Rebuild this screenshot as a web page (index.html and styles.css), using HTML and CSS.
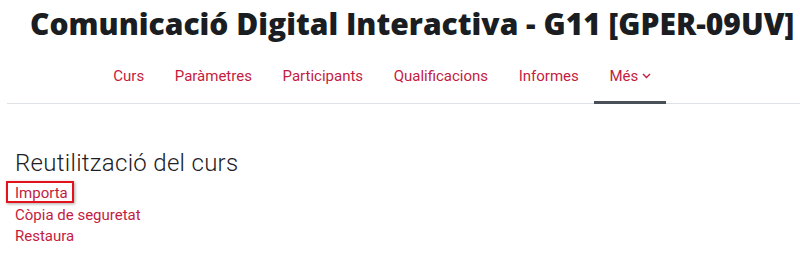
FILE: index.html
```html
<!DOCTYPE html>
<html lang="ca">
<head>
<meta charset="utf-8">
<title>Reutilització del curs</title>
<link rel="stylesheet" href="styles.css">
</head>
<body>
<header class="page-header">
  <h1 class="course-title">Comunicació Digital Interactiva - G11 [GPER-09UV]</h1>
</header>
<nav class="secondary-nav">
  <ul class="nav-list">
    <li class="nav-item"><a href="#">Curs</a></li>
    <li class="nav-item"><a href="#">Paràmetres</a></li>
    <li class="nav-item"><a href="#">Participants</a></li>
    <li class="nav-item"><a href="#">Qualificacions</a></li>
    <li class="nav-item"><a href="#">Informes</a></li>
    <li class="nav-item active"><a href="#">Més <svg class="chev" width="9" height="6" viewBox="0 0 9 6"><path d="M1 1l3.5 3.5L8 1" fill="none" stroke="currentColor" stroke-width="1.4"/></svg></a></li>
  </ul>
</nav>
<main class="content">
  <h2 class="section-title">Reutilització del curs</h2>
  <ul class="links">
    <li><a href="#" class="highlight">Importa</a></li>
    <li><a href="#">Còpia de seguretat</a></li>
    <li><a href="#">Restaura</a></li>
  </ul>
</main>
</body>
</html>
```

FILE: styles.css
```css
html, body {
  margin: 0;
  padding: 0;
  background: #fff;
}
body {
  width: 800px;
  height: 256px;
  overflow: hidden;
  font-family: "Roboto", "Liberation Sans", sans-serif;
  color: #1d2125;
}
a {
  color: #c31c3f;
  text-decoration: none;
}
.page-header {
  padding: 6px 0 0 30px;
  height: 44px;
}
.course-title {
  margin: 0;
  font-family: "Open Sans", "Liberation Sans", sans-serif;
  font-size: 30px;
  line-height: 36px;
  font-weight: 800;
  white-space: nowrap;
  color: #1a1d21;
}
.secondary-nav {
  margin-left: 7px;
  border-bottom: 1px solid #dee2e6;
}
.nav-list {
  list-style: none;
  margin: 0;
  padding: 0 0 0 91px;
  display: flex;
  height: 53px;
}
.nav-item {
  display: flex;
  align-items: center;
  padding: 0 15.3px;
  font-size: 15px;
  border-bottom: 3px solid transparent;
  margin-bottom: -1px;
}
.nav-item.active {
  border-bottom-color: #495057;
}
.nav-item a {
  display: flex;
  align-items: center;
  gap: 4px;
}
.chev {
  display: block;
  margin-top: 1px;
}
.content {
  padding: 45px 15px 0;
}
.section-title {
  margin: 0 0 6px;
  font-size: 24px;
  font-weight: 300;
  letter-spacing: 0.3px;
  line-height: 28px;
  color: #1d2125;
}
.links {
  list-style: none;
  margin: 0;
  padding: 0;
  font-size: 15px;
  line-height: 21.5px;
}
.highlight {
  position: relative;
}
.highlight::before {
  content: "";
  position: absolute;
  left: -9px;
  right: -6px;
  top: -3px;
  bottom: -1px;
  border: 2px solid #e5121b;
  box-shadow: 1px 1px 3px rgba(0,0,0,0.35);
}
```
